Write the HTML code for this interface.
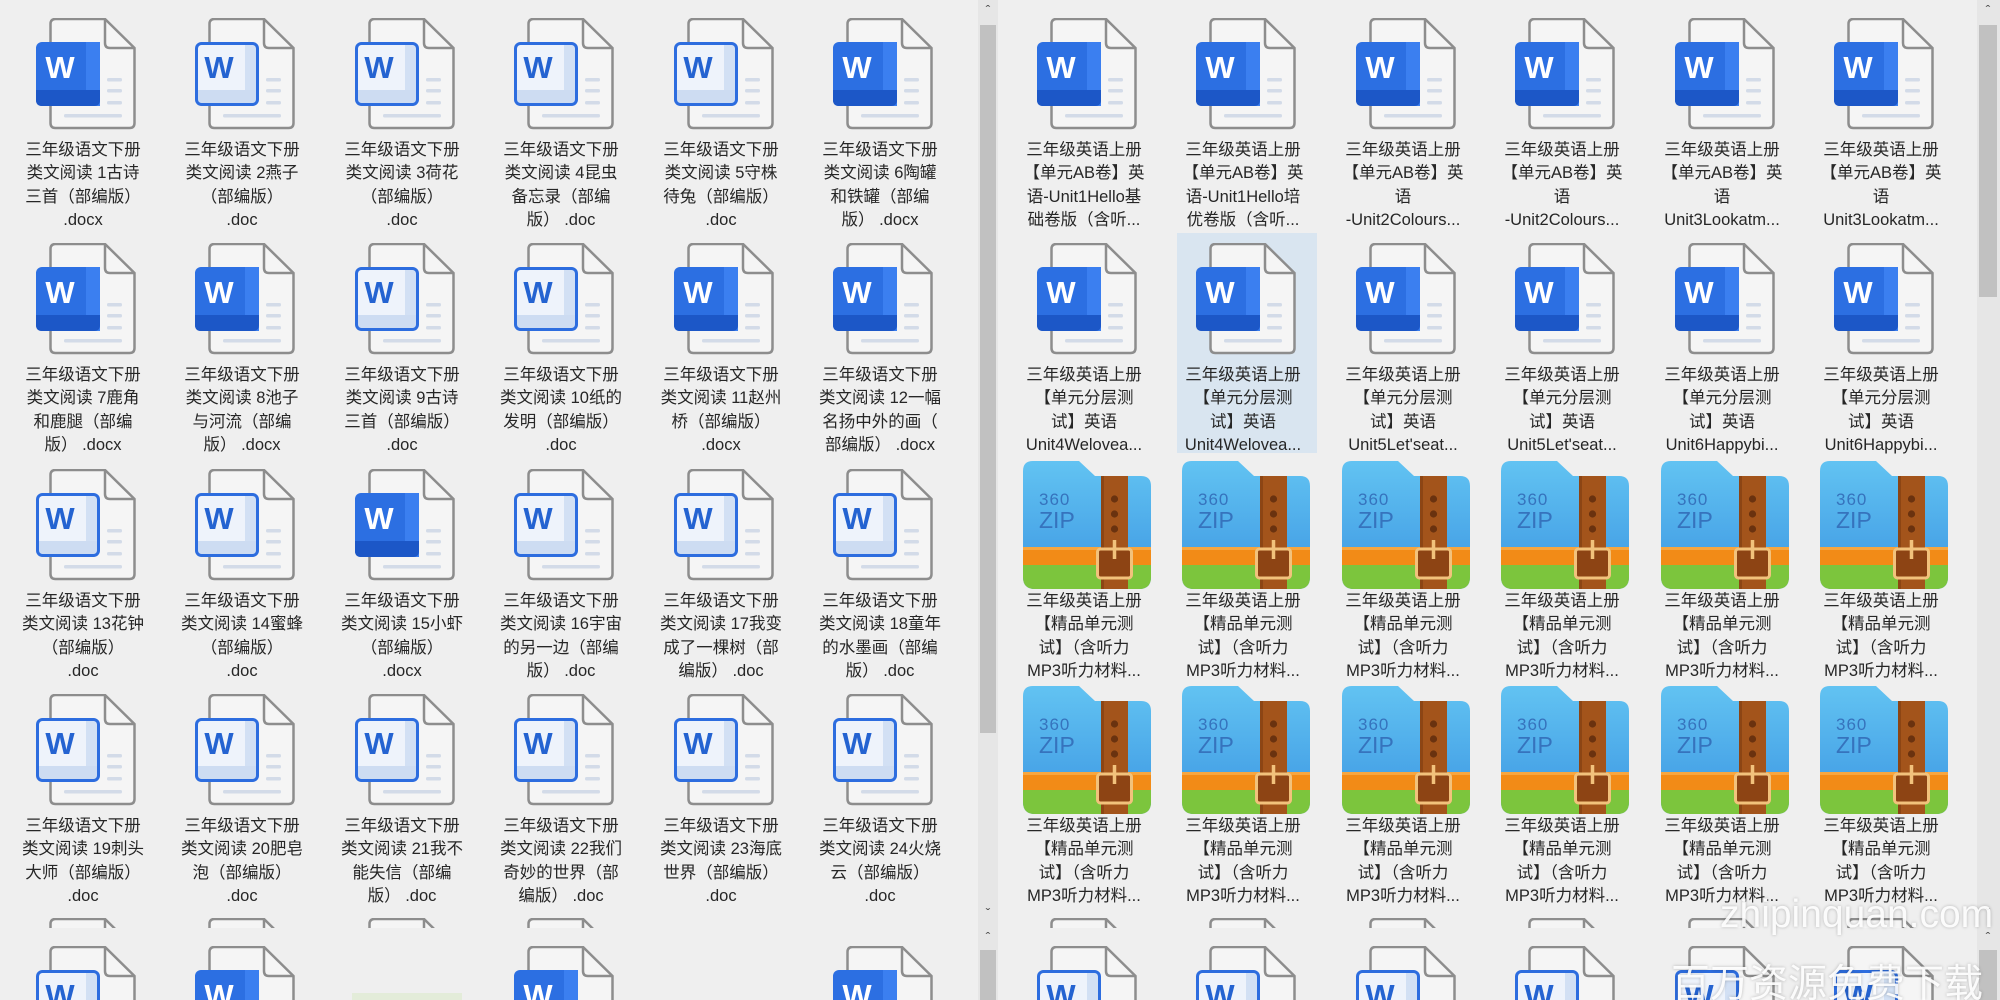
<!DOCTYPE html>
<html><head><meta charset="utf-8">
<style>
html,body{margin:0;padding:0;width:2000px;height:1000px;overflow:hidden}
body{background:#efefef;font-family:"Liberation Sans","Noto Sans CJK SC",sans-serif}
#w{position:relative;width:2000px;height:1000px;overflow:hidden;background:#efefef}
.i{position:absolute}
.t{position:absolute;width:160px;text-align:center;font-size:16.5px;line-height:23.3px;color:#262626;white-space:nowrap;font-family:"Liberation Sans","Noto Sans CJK SC",sans-serif}
.sel{position:absolute;left:1177px;top:233px;width:140px;height:220px;background:#d9e5f0}
.sb{position:absolute;background:#e6e6e6}
.th{position:absolute;background:#c1c1c1}
.ar{position:absolute;font-size:14px;color:#555;width:20px;text-align:center;line-height:14px}
.pt{position:absolute;height:10px;overflow:hidden;width:110px}
.bt{position:absolute;height:54px;overflow:hidden;width:110px;top:946px}
.wm{position:absolute;color:rgba(255,255,255,0.92);text-shadow:0 0 3px rgba(0,0,0,0.25);white-space:nowrap;font-family:"Liberation Sans","Noto Sans CJK SC",sans-serif}
</style></head><body><div id="w">
<svg width="0" height="0" style="position:absolute">
<defs>
<symbol id="page" viewBox="0 0 110 112">
<path d="M22.5,6 q0,-5 5,-5 H77 L106.5,30 V105 q0,5 -5,5 H27.5 q-5,0 -5,-5 Z" fill="#f5f5f5" stroke="#8d8d8d" stroke-width="2.5"/>
<path d="M77,1 V25 q0,5 5,5 H106.5" fill="none" stroke="#8d8d8d" stroke-width="2.5"/>
<rect x="79" y="60" width="15" height="3.5" rx="1.5" fill="#d3dbe8"/>
<rect x="79" y="71" width="15" height="3.5" rx="1.5" fill="#d3dbe8"/>
<rect x="79" y="83" width="15" height="3.5" rx="1.5" fill="#d3dbe8"/>
<rect x="36" y="96" width="58" height="3.5" rx="1.5" fill="#d3dbe8"/>
</symbol>
<symbol id="ws" viewBox="0 0 110 112">
<use href="#page"/>
<rect x="8" y="24" width="64" height="64" rx="6" fill="#2c6fe2"/>
<rect x="58" y="24" width="14" height="64" fill="#3b7ff0"/>
<path d="M8,72 H72 V82 q0,6 -6,6 H14 q-6,0 -6,-6 Z" fill="#1c57c7"/>
<text x="32" y="60" text-anchor="middle" font-family="Liberation Sans" font-weight="bold" font-size="31" fill="#fff">W</text>
</symbol>
<symbol id="wo" viewBox="0 0 110 112">
<use href="#page"/>
<rect x="9.5" y="25.5" width="61" height="61" rx="5" fill="#eef3fb"/>
<rect x="58" y="27" width="11" height="58" fill="#d2e0f4"/>
<rect x="11" y="72" width="58" height="13" fill="#cddcf2"/>
<rect x="9.5" y="25.5" width="61" height="61" rx="5" fill="none" stroke="#2d6ddf" stroke-width="3"/>
<text x="32" y="60" text-anchor="middle" font-family="Liberation Sans" font-weight="bold" font-size="31" fill="#2463d1">W</text>
</symbol>
<linearGradient id="bl" x1="0" y1="0" x2="0" y2="1"><stop offset="0" stop-color="#62c3f2"/><stop offset="1" stop-color="#3c96e2"/></linearGradient>
<clipPath id="fc"><path d="M0,10 q0,-10 10,-10 H56 L72,15 H118 q10,0 10,10 V116 q0,12 -12,12 H12 q-12,0 -12,-12 Z"/></clipPath>
<symbol id="zip" viewBox="0 0 128 128">
<g clip-path="url(#fc)">
<rect x="0" y="0" width="128" height="128" fill="url(#bl)"/>
<rect x="0" y="86" width="128" height="18" fill="#f28b17"/>
<rect x="0" y="86" width="128" height="3" fill="#f7a640"/>
<rect x="0" y="104" width="128" height="24" fill="#7cc53d"/>
<rect x="78" y="0" width="27" height="128" fill="#a3541b"/>
<rect x="78" y="0" width="3" height="128" fill="#8c4514"/>
</g>
<circle cx="91.5" cy="38" r="3.6" fill="#6a320f"/>
<circle cx="91.5" cy="53" r="3.6" fill="#6a320f"/>
<circle cx="91.5" cy="68" r="3.6" fill="#6a320f"/>
<rect x="74.5" y="88" width="34" height="29" rx="3" fill="#8d4414" stroke="#f2c27c" stroke-width="3"/>
<line x1="91.5" y1="79" x2="91.5" y2="98" stroke="#f2c27c" stroke-width="3.5"/>
<text x="16" y="44" font-family="Liberation Sans" font-size="17" fill="#3673bd" letter-spacing="1">360</text>
<text x="16" y="67" font-family="Liberation Sans" font-size="23" fill="#3673bd">ZIP</text>
</symbol>
</defs></svg>

<div class="sel"></div>

<svg class="i" style="left:28px;top:18px" width="110" height="112"><use href="#ws"/></svg>
<svg class="i" style="left:187px;top:18px" width="110" height="112"><use href="#wo"/></svg>
<svg class="i" style="left:347px;top:18px" width="110" height="112"><use href="#wo"/></svg>
<svg class="i" style="left:506px;top:18px" width="110" height="112"><use href="#wo"/></svg>
<svg class="i" style="left:666px;top:18px" width="110" height="112"><use href="#wo"/></svg>
<svg class="i" style="left:825px;top:18px" width="110" height="112"><use href="#ws"/></svg>
<div class="t" style="left:3px;top:139px">三年级语文下册<br>类文阅读 1古诗<br>三首（部编版）<br>.docx</div>
<div class="t" style="left:162px;top:139px">三年级语文下册<br>类文阅读 2燕子<br>（部编版）<br>.doc</div>
<div class="t" style="left:322px;top:139px">三年级语文下册<br>类文阅读 3荷花<br>（部编版）<br>.doc</div>
<div class="t" style="left:481px;top:139px">三年级语文下册<br>类文阅读 4昆虫<br>备忘录（部编<br>版） .doc</div>
<div class="t" style="left:641px;top:139px">三年级语文下册<br>类文阅读 5守株<br>待兔（部编版）<br>.doc</div>
<div class="t" style="left:800px;top:139px">三年级语文下册<br>类文阅读 6陶罐<br>和铁罐（部编<br>版） .docx</div>

<svg class="i" style="left:28px;top:243px" width="110" height="112"><use href="#ws"/></svg>
<svg class="i" style="left:187px;top:243px" width="110" height="112"><use href="#ws"/></svg>
<svg class="i" style="left:347px;top:243px" width="110" height="112"><use href="#wo"/></svg>
<svg class="i" style="left:506px;top:243px" width="110" height="112"><use href="#wo"/></svg>
<svg class="i" style="left:666px;top:243px" width="110" height="112"><use href="#ws"/></svg>
<svg class="i" style="left:825px;top:243px" width="110" height="112"><use href="#ws"/></svg>
<div class="t" style="left:3px;top:364px">三年级语文下册<br>类文阅读 7鹿角<br>和鹿腿（部编<br>版） .docx</div>
<div class="t" style="left:162px;top:364px">三年级语文下册<br>类文阅读 8池子<br>与河流（部编<br>版） .docx</div>
<div class="t" style="left:322px;top:364px">三年级语文下册<br>类文阅读 9古诗<br>三首（部编版）<br>.doc</div>
<div class="t" style="left:481px;top:364px">三年级语文下册<br>类文阅读 10纸的<br>发明（部编版）<br>.doc</div>
<div class="t" style="left:641px;top:364px">三年级语文下册<br>类文阅读 11赵州<br>桥（部编版）<br>.docx</div>
<div class="t" style="left:800px;top:364px">三年级语文下册<br>类文阅读 12一幅<br>名扬中外的画（<br>部编版） .docx</div>

<svg class="i" style="left:28px;top:469px" width="110" height="112"><use href="#wo"/></svg>
<svg class="i" style="left:187px;top:469px" width="110" height="112"><use href="#wo"/></svg>
<svg class="i" style="left:347px;top:469px" width="110" height="112"><use href="#ws"/></svg>
<svg class="i" style="left:506px;top:469px" width="110" height="112"><use href="#wo"/></svg>
<svg class="i" style="left:666px;top:469px" width="110" height="112"><use href="#wo"/></svg>
<svg class="i" style="left:825px;top:469px" width="110" height="112"><use href="#wo"/></svg>
<div class="t" style="left:3px;top:590px">三年级语文下册<br>类文阅读 13花钟<br>（部编版）<br>.doc</div>
<div class="t" style="left:162px;top:590px">三年级语文下册<br>类文阅读 14蜜蜂<br>（部编版）<br>.doc</div>
<div class="t" style="left:322px;top:590px">三年级语文下册<br>类文阅读 15小虾<br>（部编版）<br>.docx</div>
<div class="t" style="left:481px;top:590px">三年级语文下册<br>类文阅读 16宇宙<br>的另一边（部编<br>版） .doc</div>
<div class="t" style="left:641px;top:590px">三年级语文下册<br>类文阅读 17我变<br>成了一棵树（部<br>编版） .doc</div>
<div class="t" style="left:800px;top:590px">三年级语文下册<br>类文阅读 18童年<br>的水墨画（部编<br>版） .doc</div>

<svg class="i" style="left:28px;top:694px" width="110" height="112"><use href="#wo"/></svg>
<svg class="i" style="left:187px;top:694px" width="110" height="112"><use href="#wo"/></svg>
<svg class="i" style="left:347px;top:694px" width="110" height="112"><use href="#wo"/></svg>
<svg class="i" style="left:506px;top:694px" width="110" height="112"><use href="#wo"/></svg>
<svg class="i" style="left:666px;top:694px" width="110" height="112"><use href="#wo"/></svg>
<svg class="i" style="left:825px;top:694px" width="110" height="112"><use href="#wo"/></svg>
<div class="t" style="left:3px;top:815px">三年级语文下册<br>类文阅读 19刺头<br>大师（部编版）<br>.doc</div>
<div class="t" style="left:162px;top:815px">三年级语文下册<br>类文阅读 20肥皂<br>泡（部编版）<br>.doc</div>
<div class="t" style="left:322px;top:815px">三年级语文下册<br>类文阅读 21我不<br>能失信（部编<br>版） .doc</div>
<div class="t" style="left:481px;top:815px">三年级语文下册<br>类文阅读 22我们<br>奇妙的世界（部<br>编版） .doc</div>
<div class="t" style="left:641px;top:815px">三年级语文下册<br>类文阅读 23海底<br>世界（部编版）<br>.doc</div>
<div class="t" style="left:800px;top:815px">三年级语文下册<br>类文阅读 24火烧<br>云（部编版）<br>.doc</div>

<div class="pt" style="left:28px;top:918px"><svg width="110" height="112"><use href="#page"/></svg></div>
<div class="pt" style="left:187px;top:918px"><svg width="110" height="112"><use href="#page"/></svg></div>
<div class="pt" style="left:347px;top:918px"><svg width="110" height="112"><use href="#page"/></svg></div>
<div class="pt" style="left:506px;top:918px"><svg width="110" height="112"><use href="#page"/></svg></div>
<div class="pt" style="left:1029px;top:918px"><svg width="110" height="112"><use href="#page"/></svg></div>
<div class="pt" style="left:1188px;top:918px"><svg width="110" height="112"><use href="#page"/></svg></div>
<div class="pt" style="left:1348px;top:918px"><svg width="110" height="112"><use href="#page"/></svg></div>
<div class="pt" style="left:1507px;top:918px"><svg width="110" height="112"><use href="#page"/></svg></div>
<div class="pt" style="left:1667px;top:918px"><svg width="110" height="112"><use href="#page"/></svg></div>
<div class="pt" style="left:1826px;top:918px"><svg width="110" height="112"><use href="#page"/></svg></div>

<div class="bt" style="left:28px"><svg width="110" height="112"><use href="#wo"/></svg></div>
<div class="bt" style="left:187px"><svg width="110" height="112"><use href="#ws"/></svg></div>
<div class="i" style="left:352px;top:993px;width:110px;height:7px;background:#e3ecd9"></div>
<div class="bt" style="left:506px"><svg width="110" height="112"><use href="#ws"/></svg></div>
<div class="bt" style="left:825px"><svg width="110" height="112"><use href="#ws"/></svg></div>

<svg class="i" style="left:1029px;top:18px" width="110" height="112"><use href="#ws"/></svg>
<svg class="i" style="left:1188px;top:18px" width="110" height="112"><use href="#ws"/></svg>
<svg class="i" style="left:1348px;top:18px" width="110" height="112"><use href="#ws"/></svg>
<svg class="i" style="left:1507px;top:18px" width="110" height="112"><use href="#ws"/></svg>
<svg class="i" style="left:1667px;top:18px" width="110" height="112"><use href="#ws"/></svg>
<svg class="i" style="left:1826px;top:18px" width="110" height="112"><use href="#ws"/></svg>
<div class="t" style="left:1004px;top:139px">三年级英语上册<br>【单元AB卷】英<br>语-Unit1Hello基<br>础卷版（含听...</div>
<div class="t" style="left:1163px;top:139px">三年级英语上册<br>【单元AB卷】英<br>语-Unit1Hello培<br>优卷版（含听...</div>
<div class="t" style="left:1323px;top:139px">三年级英语上册<br>【单元AB卷】英<br>语<br>-Unit2Colours...</div>
<div class="t" style="left:1482px;top:139px">三年级英语上册<br>【单元AB卷】英<br>语<br>-Unit2Colours...</div>
<div class="t" style="left:1642px;top:139px">三年级英语上册<br>【单元AB卷】英<br>语<br>Unit3Lookatm...</div>
<div class="t" style="left:1801px;top:139px">三年级英语上册<br>【单元AB卷】英<br>语<br>Unit3Lookatm...</div>

<svg class="i" style="left:1029px;top:243px" width="110" height="112"><use href="#ws"/></svg>
<svg class="i" style="left:1188px;top:243px" width="110" height="112"><use href="#ws"/></svg>
<svg class="i" style="left:1348px;top:243px" width="110" height="112"><use href="#ws"/></svg>
<svg class="i" style="left:1507px;top:243px" width="110" height="112"><use href="#ws"/></svg>
<svg class="i" style="left:1667px;top:243px" width="110" height="112"><use href="#ws"/></svg>
<svg class="i" style="left:1826px;top:243px" width="110" height="112"><use href="#ws"/></svg>
<div class="t" style="left:1004px;top:364px">三年级英语上册<br>【单元分层测<br>试】英语<br>Unit4Welovea...</div>
<div class="t" style="left:1163px;top:364px">三年级英语上册<br>【单元分层测<br>试】英语<br>Unit4Welovea...</div>
<div class="t" style="left:1323px;top:364px">三年级英语上册<br>【单元分层测<br>试】英语<br>Unit5Let'seat...</div>
<div class="t" style="left:1482px;top:364px">三年级英语上册<br>【单元分层测<br>试】英语<br>Unit5Let'seat...</div>
<div class="t" style="left:1642px;top:364px">三年级英语上册<br>【单元分层测<br>试】英语<br>Unit6Happybi...</div>
<div class="t" style="left:1801px;top:364px">三年级英语上册<br>【单元分层测<br>试】英语<br>Unit6Happybi...</div>

<svg class="i" style="left:1023px;top:461px" width="128" height="128"><use href="#zip"/></svg>
<svg class="i" style="left:1182px;top:461px" width="128" height="128"><use href="#zip"/></svg>
<svg class="i" style="left:1342px;top:461px" width="128" height="128"><use href="#zip"/></svg>
<svg class="i" style="left:1501px;top:461px" width="128" height="128"><use href="#zip"/></svg>
<svg class="i" style="left:1661px;top:461px" width="128" height="128"><use href="#zip"/></svg>
<svg class="i" style="left:1820px;top:461px" width="128" height="128"><use href="#zip"/></svg>
<div class="t" style="left:1004px;top:590px">三年级英语上册<br>【精品单元测<br>试】（含听力<br>MP3听力材料...</div>
<div class="t" style="left:1163px;top:590px">三年级英语上册<br>【精品单元测<br>试】（含听力<br>MP3听力材料...</div>
<div class="t" style="left:1323px;top:590px">三年级英语上册<br>【精品单元测<br>试】（含听力<br>MP3听力材料...</div>
<div class="t" style="left:1482px;top:590px">三年级英语上册<br>【精品单元测<br>试】（含听力<br>MP3听力材料...</div>
<div class="t" style="left:1642px;top:590px">三年级英语上册<br>【精品单元测<br>试】（含听力<br>MP3听力材料...</div>
<div class="t" style="left:1801px;top:590px">三年级英语上册<br>【精品单元测<br>试】（含听力<br>MP3听力材料...</div>

<svg class="i" style="left:1023px;top:686px" width="128" height="128"><use href="#zip"/></svg>
<svg class="i" style="left:1182px;top:686px" width="128" height="128"><use href="#zip"/></svg>
<svg class="i" style="left:1342px;top:686px" width="128" height="128"><use href="#zip"/></svg>
<svg class="i" style="left:1501px;top:686px" width="128" height="128"><use href="#zip"/></svg>
<svg class="i" style="left:1661px;top:686px" width="128" height="128"><use href="#zip"/></svg>
<svg class="i" style="left:1820px;top:686px" width="128" height="128"><use href="#zip"/></svg>
<div class="t" style="left:1004px;top:815px">三年级英语上册<br>【精品单元测<br>试】（含听力<br>MP3听力材料...</div>
<div class="t" style="left:1163px;top:815px">三年级英语上册<br>【精品单元测<br>试】（含听力<br>MP3听力材料...</div>
<div class="t" style="left:1323px;top:815px">三年级英语上册<br>【精品单元测<br>试】（含听力<br>MP3听力材料...</div>
<div class="t" style="left:1482px;top:815px">三年级英语上册<br>【精品单元测<br>试】（含听力<br>MP3听力材料...</div>
<div class="t" style="left:1642px;top:815px">三年级英语上册<br>【精品单元测<br>试】（含听力<br>MP3听力材料...</div>
<div class="t" style="left:1801px;top:815px">三年级英语上册<br>【精品单元测<br>试】（含听力<br>MP3听力材料...</div>

<div class="bt" style="left:1029px"><svg width="110" height="112"><use href="#wo"/></svg></div>
<div class="bt" style="left:1188px"><svg width="110" height="112"><use href="#wo"/></svg></div>
<div class="bt" style="left:1348px"><svg width="110" height="112"><use href="#wo"/></svg></div>
<div class="bt" style="left:1507px"><svg width="110" height="112"><use href="#wo"/></svg></div>
<div class="bt" style="left:1667px"><svg width="110" height="112"><use href="#wo"/></svg></div>
<div class="bt" style="left:1826px"><svg width="110" height="112"><use href="#wo"/></svg></div>

<div class="sb" style="left:978px;top:0;width:20px;height:1000px"></div>
<div class="th" style="left:980px;top:25px;width:16px;height:708px"></div>
<div class="ar" style="left:978px;top:3px">&#710;</div>
<div class="ar" style="left:978px;top:906px">&#711;</div>
<div class="ar" style="left:978px;top:930px">&#710;</div>
<div class="th" style="left:980px;top:950px;width:16px;height:50px"></div>

<div class="sb" style="left:1977px;top:0;width:23px;height:1000px"></div>
<div class="th" style="left:1979px;top:25px;width:18px;height:272px"></div>
<div class="ar" style="left:1978px;top:3px">&#710;</div>
<div class="ar" style="left:1978px;top:906px">&#711;</div>
<div class="ar" style="left:1978px;top:930px">&#710;</div>
<div class="th" style="left:1979px;top:950px;width:18px;height:50px"></div>

<div class="wm" style="left:1720px;top:893px;font-size:39px">zhipinquan.com</div>
<div class="wm" style="left:1671px;top:953px;font-size:39px">百万资源免费下载</div>
</div></body></html>
